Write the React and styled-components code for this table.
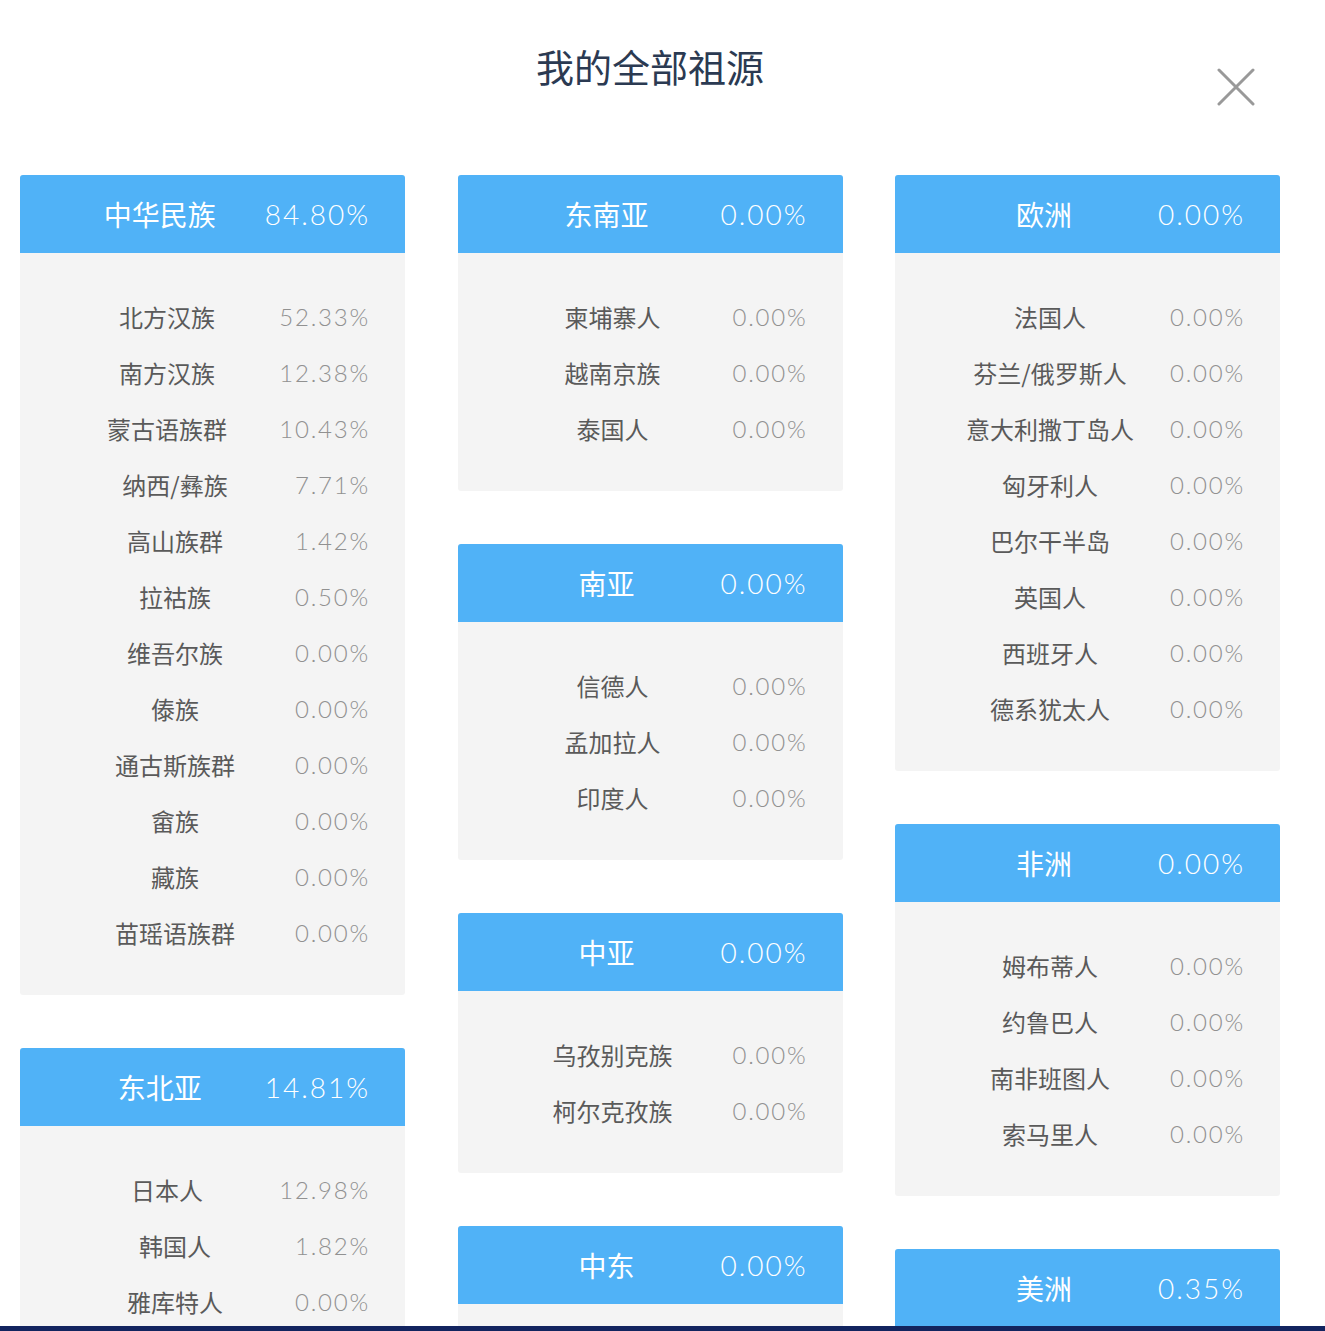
import React from "react";
import styled, { createGlobalStyle } from "styled-components";

const GlobalStyle = createGlobalStyle`
  body {
    margin: 0;
    background: #12245f;
    font-family: "Noto Sans CJK SC", "Noto Sans", sans-serif;
  }
`;

const Modal = styled.div`
  position: relative;
  height: 1326px;
  overflow: hidden;
  background: #ffffff;
`;

const Title = styled.h1`
  margin: 0;
  width: 1300px;
  padding-top: 37px;
  height: 175px;
  box-sizing: border-box;
  line-height: 58px;
  text-align: center;
  font-size: 38px;
  font-weight: 400;
  color: #2b3a52;
`;

const Close = styled.button`
  position: absolute;
  top: 68px;
  right: 70px;
  width: 38px;
  height: 38px;
  padding: 0;
  border: none;
  background: none;
  cursor: pointer;
`;

const Grid = styled.div`
  display: flex;
  justify-content: space-between;
  width: 1260px;
  margin-left: 20px;
`;

const Column = styled.div`
  display: flex;
  flex-direction: column;
  gap: 53px;
  width: 385px;
`;

const Card = styled.div`
  border-radius: 3px;
  overflow: hidden;
  background: #f4f4f4;
`;

const Head = styled.div`
  display: flex;
  align-items: center;
  height: 78px;
  padding: 0 35px 0 35px;
  background: #50b2f7;
  color: #ffffff;
  font-size: 28px;
`;

const Body = styled.div`
  padding: 35px 0;
`;

const Row = styled.div`
  display: flex;
  align-items: center;
  height: 56px;
  padding: 0 35px 0 35px;
  font-size: 24px;
  font-weight: 400;
  color: #5a5a5a;
`;

const Name = styled.span`
  flex: 1;
  text-align: center;
  white-space: nowrap;
`;

const Value = styled.span`
  font-family: Lato, "Liberation Sans", sans-serif;
  font-weight: 300;
  letter-spacing: ${(p) => (p.$big ? "2px" : "1.8px")};
  color: ${(p) => (p.$big ? "#ffffff" : "#919191")};
  white-space: nowrap;
`;

const columns = [
  [
    {
      name: "中华民族",
      value: "84.80%",
      rows: [
        ["北方汉族", "52.33%"],
        ["南方汉族", "12.38%"],
        ["蒙古语族群", "10.43%"],
        ["纳西/彝族", "7.71%"],
        ["高山族群", "1.42%"],
        ["拉祜族", "0.50%"],
        ["维吾尔族", "0.00%"],
        ["傣族", "0.00%"],
        ["通古斯族群", "0.00%"],
        ["畲族", "0.00%"],
        ["藏族", "0.00%"],
        ["苗瑶语族群", "0.00%"],
      ],
    },
    {
      name: "东北亚",
      value: "14.81%",
      rows: [
        ["日本人", "12.98%"],
        ["韩国人", "1.82%"],
        ["雅库特人", "0.00%"],
      ],
    },
  ],
  [
    {
      name: "东南亚",
      value: "0.00%",
      rows: [
        ["柬埔寨人", "0.00%"],
        ["越南京族", "0.00%"],
        ["泰国人", "0.00%"],
      ],
    },
    {
      name: "南亚",
      value: "0.00%",
      rows: [
        ["信德人", "0.00%"],
        ["孟加拉人", "0.00%"],
        ["印度人", "0.00%"],
      ],
    },
    {
      name: "中亚",
      value: "0.00%",
      rows: [
        ["乌孜别克族", "0.00%"],
        ["柯尔克孜族", "0.00%"],
      ],
    },
    { name: "中东", value: "0.00%", rows: [] },
  ],
  [
    {
      name: "欧洲",
      value: "0.00%",
      rows: [
        ["法国人", "0.00%"],
        ["芬兰/俄罗斯人", "0.00%"],
        ["意大利撒丁岛人", "0.00%"],
        ["匈牙利人", "0.00%"],
        ["巴尔干半岛", "0.00%"],
        ["英国人", "0.00%"],
        ["西班牙人", "0.00%"],
        ["德系犹太人", "0.00%"],
      ],
    },
    {
      name: "非洲",
      value: "0.00%",
      rows: [
        ["姆布蒂人", "0.00%"],
        ["约鲁巴人", "0.00%"],
        ["南非班图人", "0.00%"],
        ["索马里人", "0.00%"],
      ],
    },
    { name: "美洲", value: "0.35%", rows: [] },
  ],
];

const Region = ({ region }) => (
  <Card>
    <Head>
      <Name>{region.name}</Name>
      <Value $big>{region.value}</Value>
    </Head>
    <Body>
      {region.rows.map(([name, value]) => (
        <Row key={name}>
          <Name>{name}</Name>
          <Value>{value}</Value>
        </Row>
      ))}
    </Body>
  </Card>
);

const App = () => {
  return (
    <Modal>
      <GlobalStyle />
      <Title>我的全部祖源</Title>
      <Close aria-label="关闭">
        <svg width="38" height="38" viewBox="0 0 38 38">
          <path
            d="M2 2 L36 36 M36 2 L2 36"
            stroke="#999999"
            strokeWidth="3"
            strokeLinecap="round"
          />
        </svg>
      </Close>
      <Grid>
        {columns.map((col, i) => (
          <Column key={i}>
            {col.map((region) => (
              <Region key={region.name} region={region} />
            ))}
          </Column>
        ))}
      </Grid>
    </Modal>
  );
};

export default App;
